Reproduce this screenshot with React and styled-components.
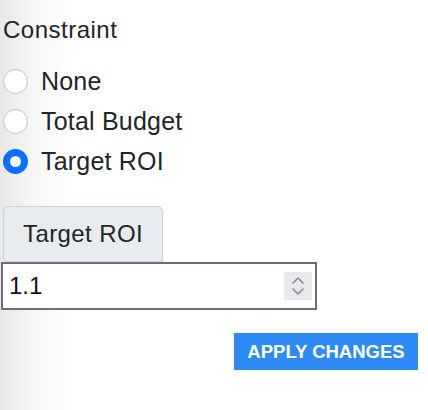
import React, { useState } from "react";
import styled, { createGlobalStyle } from "styled-components";

const Global = createGlobalStyle`
  html, body { margin: 0; padding: 0; }
  body {
    background: linear-gradient(to right, #e8e8e8 0px, #f5f5f5 30px, #ffffff 70px);
    min-height: 410px;
    font-family: "Liberation Sans", Arial, Helvetica, sans-serif;
    color: #212529;
  }
`;

const Page = styled.div`
  display: flex;
  flex-direction: column;
  align-items: flex-start;
  padding: 12px 0 0 1px;
  width: 428px;
  box-sizing: border-box;
`;

const Heading = styled.div`
  font-size: 24px;
  line-height: 36px;
  margin-left: 2px;
  letter-spacing: 0.5px;
`;

const RadioGroup = styled.div`
  display: flex;
  flex-direction: column;
  margin: 13px 0 0 2px;
`;

const RadioRow = styled.label`
  display: flex;
  align-items: center;
  gap: 13px;
  height: 40px;
  font-size: 25px;
  line-height: 40px;
  letter-spacing: 0.2px;
  cursor: pointer;
`;

const RadioCircle = styled.span`
  width: 25px;
  height: 25px;
  box-sizing: border-box;
  border-radius: 50%;
  flex: none;
  background: #fff;
  border: ${(p) => (p.$checked ? "7px solid #0d6efd" : "1px solid #c6c6c6")};
`;

const AddonLabel = styled.div`
  margin: 25px 0 0 2px;
  padding: 9px 19px;
  font-size: 24px;
  line-height: 36px;
  letter-spacing: 0.4px;
  background: #e9ecef;
  border: 1px solid #ced4da;
  border-radius: 5px 5px 0 5px;
`;

const NumberBox = styled.div`
  display: flex;
  align-items: center;
  width: 316px;
  height: 48px;
  box-sizing: border-box;
  border: 2px solid #6f6c79;
  background: #fff;
  padding: 0 3px 0 6px;
`;

const NumberInput = styled.input`
  flex: 1;
  min-width: 0;
  border: none;
  outline: none;
  background: transparent;
  font-family: "Liberation Sans", Arial, sans-serif;
  font-size: 24px;
  color: #111;
  padding: 0;
`;

const Spinner = styled.div`
  width: 28px;
  height: 28px;
  background: #e9e9ed;
  display: flex;
  align-items: center;
  justify-content: center;
`;

const Footer = styled.div`
  align-self: stretch;
  display: flex;
  justify-content: flex-end;
  padding-right: 10px;
  margin-top: 23px;
`;

const ApplyButton = styled.button`
  width: 184px;
  height: 37px;
  border: none;
  background: #2e8af7;
  color: #fff;
  font-family: "Liberation Sans", Arial, sans-serif;
  font-weight: 700;
  font-size: 18.5px;
  cursor: pointer;
  padding: 0;
`;

const options = ["None", "Total Budget", "Target ROI"];

export default function App() {
  const [sel, setSel] = useState("Target ROI");
  const [val, setVal] = useState("1.1");
  return (
    <>
      <Global />
      <Page>
        <Heading>Constraint</Heading>
        <RadioGroup>
          {options.map((o) => (
            <RadioRow key={o} onClick={() => setSel(o)}>
              <RadioCircle $checked={sel === o} />
              {o}
            </RadioRow>
          ))}
        </RadioGroup>
        <AddonLabel>Target ROI</AddonLabel>
        <NumberBox>
          <NumberInput value={val} onChange={(e) => setVal(e.target.value)} />
          <Spinner>
            <svg width="14" height="22" viewBox="0 0 14 22" fill="none" stroke="#8b8995" strokeWidth="1.6" strokeLinecap="round" strokeLinejoin="round">
              <path d="M2 8 L7 3 L12 8" />
              <path d="M2 14 L7 19 L12 14" />
            </svg>
          </Spinner>
        </NumberBox>
        <Footer>
          <ApplyButton>APPLY CHANGES</ApplyButton>
        </Footer>
      </Page>
    </>
  );
}
